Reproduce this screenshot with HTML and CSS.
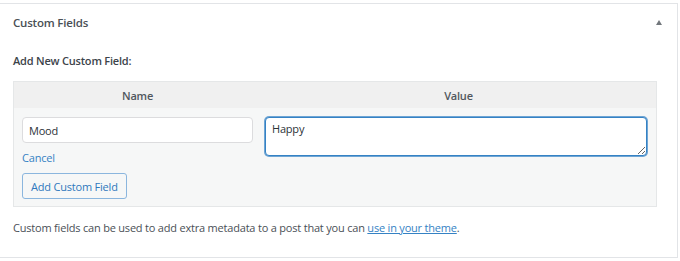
FILE: index.html
```html
<!DOCTYPE html>
<html lang="en">
<head>
  <meta charset="UTF-8" />
  <title>Custom Fields</title>
  <link rel="stylesheet" href="styles.css">
</head>
<body>
  <!-- Custom Fields box -->
  <div class="postbox">
    <div class="postbox-header">
      <h2>Custom Fields</h2>
      <span class="toggle-arrow"></span>
    </div>

    <div class="inside">
      <p class="add-title">Add New Custom Field:</p>

      <table class="meta-table">
        <thead>
          <tr>
            <th class="col-name">Name</th>
            <th class="col-value">Value</th>
          </tr>
        </thead>
        <tbody>
          <tr>
            <td class="col-name">
              <input type="text" class="meta-key" value="Mood" />
              <a href="#" class="cancel-link">Cancel</a>
            </td>
            <td class="col-value">
              <textarea class="meta-value">Happy</textarea>
            </td>
          </tr>
          <tr>
            <td colspan="2" class="submit-cell">
              <button class="add-button">Add Custom Field</button>
            </td>
          </tr>
        </tbody>
      </table>

      <p class="note">Custom fields can be used to add extra metadata to a post that you can <a href="#">use in your theme</a>.</p>
    </div>
  </div>
</body>
</html>
```

FILE: styles.css
```css
body {
  font-family: "Open Sans", "Noto Sans", sans-serif;
  font-size: 11px;
  line-height: 15px;
  letter-spacing: -0.2px;
  color: #3c434a;
  margin: 0;
  padding: 0;
  background-color: #fff;
}
.postbox {
  margin: 3px 0 0 -1px;
  width: 679px;
  height: 255px;
  box-sizing: border-box;
  border: 1px solid #e2e4e7;
  background-color: #fff;
}
.postbox-header {
  display: flex;
  justify-content: space-between;
  align-items: center;
  height: 37px;
  padding: 0 15px 0 13px;
}
.postbox-header h2 {
  margin: 0;
  font-size: 11.5px;
  font-weight: 600;
  color: #4a5056;
}
.toggle-arrow {
  width: 0;
  height: 0;
  border-left: 3.5px solid transparent;
  border-right: 3.5px solid transparent;
  border-bottom: 5px solid #72777c;
}
.inside {
  padding: 0 20px 0 13px;
}
.add-title {
  margin: 12px 0 13px;
  font-weight: 600;
  color: #3c434a;
}
.meta-table {
  width: 644px;
  table-layout: fixed;
  border-collapse: separate;
  border-spacing: 0;
  background-color: #f6f7f7;
  border: 1px solid #e5e7e8;
}
.meta-table th {
  background-color: #f0f0f0;
  height: 26px;
  padding: 0;
  font-weight: 600;
  color: #50575e;
}
.meta-table th.col-name {
  width: 247px;
}
.meta-table td {
  vertical-align: top;
  padding: 9px 8px 0 8px;
}
.meta-table td.col-value {
  padding: 9px 9px 0 4px;
}
.meta-key {
  display: block;
  width: 100%;
  box-sizing: border-box;
  height: 26px;
  margin: 0;
  padding: 0 6px;
  border: 1px solid #dcdcde;
  border-radius: 4px;
  font-family: inherit;
  font-size: 11px;
  letter-spacing: -0.2px;
  color: #2c3338;
}
.cancel-link {
  display: inline-block;
  margin-top: 7px;
  color: #3582c4;
  text-decoration: none;
}
.meta-value {
  display: block;
  width: 100%;
  box-sizing: border-box;
  height: 39px;
  margin: 0;
  padding: 3px 6px;
  border: 1px solid #3582c4;
  border-radius: 4px;
  box-shadow: 0 0 0 1px rgba(53, 130, 196, 0.7);
  font-family: inherit;
  font-size: 11px;
  line-height: 15px;
  letter-spacing: -0.2px;
  color: #2c3338;
  resize: vertical;
  outline: none;
}
.meta-table td.submit-cell {
  padding: 8px 8px 7px;
}
.add-button {
  display: block;
  height: 26px;
  padding: 0 8px;
  border: 1px solid #8bb6de;
  border-radius: 3px;
  background-color: #f6f7f7;
  color: #2f78bd;
  font-family: inherit;
  font-size: 11px;
  letter-spacing: -0.2px;
  cursor: pointer;
}
.note {
  margin: 13px 0 0;
  color: #4a5056;
}
.note a {
  color: #3582c4;
}
```
